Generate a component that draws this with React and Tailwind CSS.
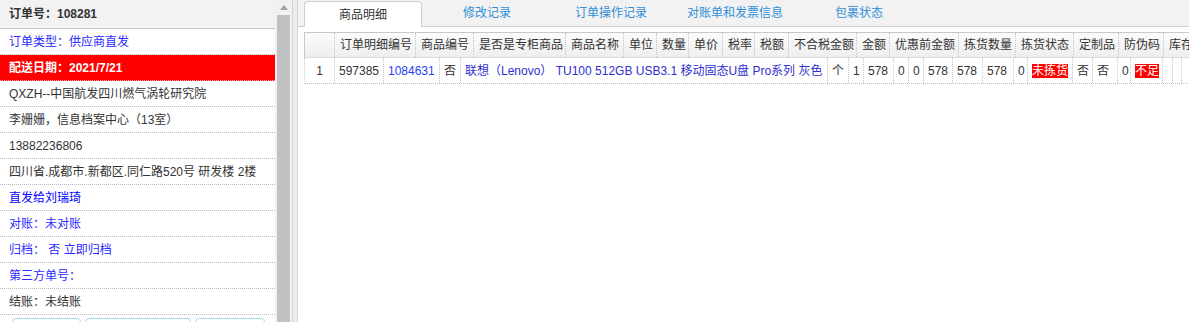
import React from "react"

const headCols = [
  { w: 30, label: "" },
  { w: 81, label: "订单明细编号" },
  { w: 58, label: "商品编号" },
  { w: 92, label: "是否是专柜商品" },
  { w: 58, label: "商品名称" },
  { w: 33, label: "单位" },
  { w: 32, label: "数量" },
  { w: 34, label: "单价" },
  { w: 32, label: "税率" },
  { w: 34, label: "税额" },
  { w: 68, label: "不合税金额" },
  { w: 33, label: "金额" },
  { w: 69, label: "优惠前金额" },
  { w: 57, label: "拣货数量" },
  { w: 58, label: "拣货状态" },
  { w: 45, label: "定制品" },
  { w: 45, label: "防伪码" },
  { w: 45, label: "库存" },
]

const bodyCols = [
  { w: 30, v: "1", center: true },
  { w: 49, v: "597385" },
  { w: 56, v: "1084631", blue: true },
  { w: 21, v: "否" },
  { w: 367, v: "联想（Lenovo） TU100 512GB USB3.1 移动固态U盘 Pro系列 灰色", name: true },
  { w: 21, v: "个" },
  { w: 15, v: "1" },
  { w: 30, v: "578" },
  { w: 15, v: "0" },
  { w: 15, v: "0" },
  { w: 29, v: "578" },
  { w: 30, v: "578" },
  { w: 31, v: "578" },
  { w: 14, v: "0" },
  { w: 45, v: "未拣货", red: true },
  { w: 20, v: "否" },
  { w: 25, v: "否" },
  { w: 13, v: "0" },
  { w: 32, v: "不足", red: true },
  { w: 10, v: "" },
  { w: 8, v: "" },
  { w: 40, v: "" },
]

const infoRows = [
  { text: "订单类型：供应商直发", cls: "text-[#2a2aff]" },
  { text: "配送日期：2021/7/21", cls: "bg-[#ff0000] text-white font-bold border-b-[#ffb3b3]" },
  { text: "QXZH--中国航发四川燃气涡轮研究院", cls: "text-[#333]" },
  { text: "李姗姗，信息档案中心（13室）", cls: "text-[#333]" },
  { text: "13882236806", cls: "text-[#333]" },
  { text: "四川省.成都市.新都区.同仁路520号 研发楼 2楼", cls: "text-[#333]" },
  { text: "直发给刘瑞琦", cls: "text-[#0000ff]" },
  { text: "对账：未对账", cls: "text-[#2a2aff]" },
  { text: "归档： 否 立即归档", cls: "text-[#2a2aff]" },
  { text: "第三方单号：", cls: "text-[#2a2aff]" },
  { text: "结账：未结账", cls: "text-[#333]" },
]

const tabs = ["商品明细", "修改记录", "订单操作记录", "对账单和发票信息", "包裹状态"]

export default function App() {
  return (
    <div className="flex h-[322px] w-[1189px] overflow-hidden bg-white text-[12px] font-['Liberation_Sans','Noto_Sans_CJK_SC',sans-serif]">
      {/* Left order info */}
      <div className="flex w-[292px] shrink-0">
        <div className="w-[275px] overflow-hidden">
          <div className="h-[29px] bg-[#f2f2f2] border-b border-[#c8c8c8] flex items-center pl-[9px] font-bold text-[#333]">
            订单号：108281
          </div>
          {infoRows.map((r, i) => (
            <div
              key={i}
              className={`h-[26px] flex items-center pl-[9px] whitespace-nowrap border-b border-dotted border-[#bbb] ${r.cls}`}
            >
              {r.text}
            </div>
          ))}
          <div className="flex gap-[4px] pl-[12px] pt-[3px]">
            <button className="w-[69px] h-[26px] rounded-[4px] border border-[#a6d8e6] bg-white"></button>
            <button className="w-[106px] h-[26px] rounded-[4px] border border-[#a6d8e6] bg-white"></button>
            <button className="w-[70px] h-[26px] rounded-[4px] border border-[#a6d8e6] bg-white"></button>
          </div>
        </div>
        {/* scrollbar */}
        <div className="w-[17px] bg-[#f1f1f1] flex flex-col items-center">
          <div className="h-[15px] flex items-center justify-center">
            <svg width="8" height="5" viewBox="0 0 8 5">
              <path d="M0 5 L4 0 L8 5 Z" fill="#a3a3a3" />
            </svg>
          </div>
          <div className="w-[13px] flex-1 bg-[#c1c1c1]"></div>
        </div>
      </div>

      {/* splitter */}
      <div className="w-[6px] shrink-0 bg-[#ececec] border-l border-r border-[#d4d4d4]"></div>

      {/* Right panel */}
      <div className="flex-1 min-w-0 flex flex-col overflow-hidden">
        <div className="h-[27px] bg-[#f2f2f2] border-b border-[#cfcfcf] flex items-end gap-[6px] pl-[6px] shrink-0">
          {tabs.map((t, i) =>
            i === 0 ? (
              <div
                key={t}
                className="w-[118px] h-[26px] -mb-px bg-white border border-b-0 border-[#cfcfcf] rounded-t-[4px] flex items-center justify-center text-[#333]"
              >
                {t}
              </div>
            ) : (
              <div key={t} className="w-[118px] h-[26px] flex items-center justify-center text-[#2f8fd8]">
                {t}
              </div>
            )
          )}
        </div>

        <div className="pl-[6px] pt-[5px]">
          <div className="w-max">
            {/* header row */}
            <div className="flex h-[26px] border-t border-b border-l border-t-[#c8c8c8] border-b-[#dcdcdc] border-l-[#c8c8c8] bg-linear-to-b from-[#fcfcfc] to-[#eeeeee] text-[#333]">
              {headCols.map((c, i) => (
                <div
                  key={i}
                  style={{ width: c.w }}
                  className="shrink-0 flex items-center px-[5px] whitespace-nowrap overflow-hidden border-r border-dotted border-[#c4c4c4]"
                >
                  {c.label}
                </div>
              ))}
            </div>
            {/* body row */}
            <div className="flex h-[26px] border-b border-dotted border-[#bbb] border-l border-l-solid border-l-[#c8c8c8] text-[#333]">
              {bodyCols.map((c, i) => (
                <div
                  key={i}
                  style={{ width: c.w }}
                  className={`shrink-0 flex items-center whitespace-nowrap overflow-hidden border-r border-dotted border-[#c4c4c4] ${
                    c.center ? "justify-center" : "px-[4px]"
                  } ${c.blue ? "text-[#1f3fff]" : ""} ${c.name ? "text-[#2f2fd0]" : ""}`}
                >
                  {c.red ? (
                    <span className="bg-[#ff0000] text-white leading-[14px] inline-block">{c.v}</span>
                  ) : (
                    c.v
                  )}
                </div>
              ))}
            </div>
          </div>
        </div>
      </div>
    </div>
  )
}
